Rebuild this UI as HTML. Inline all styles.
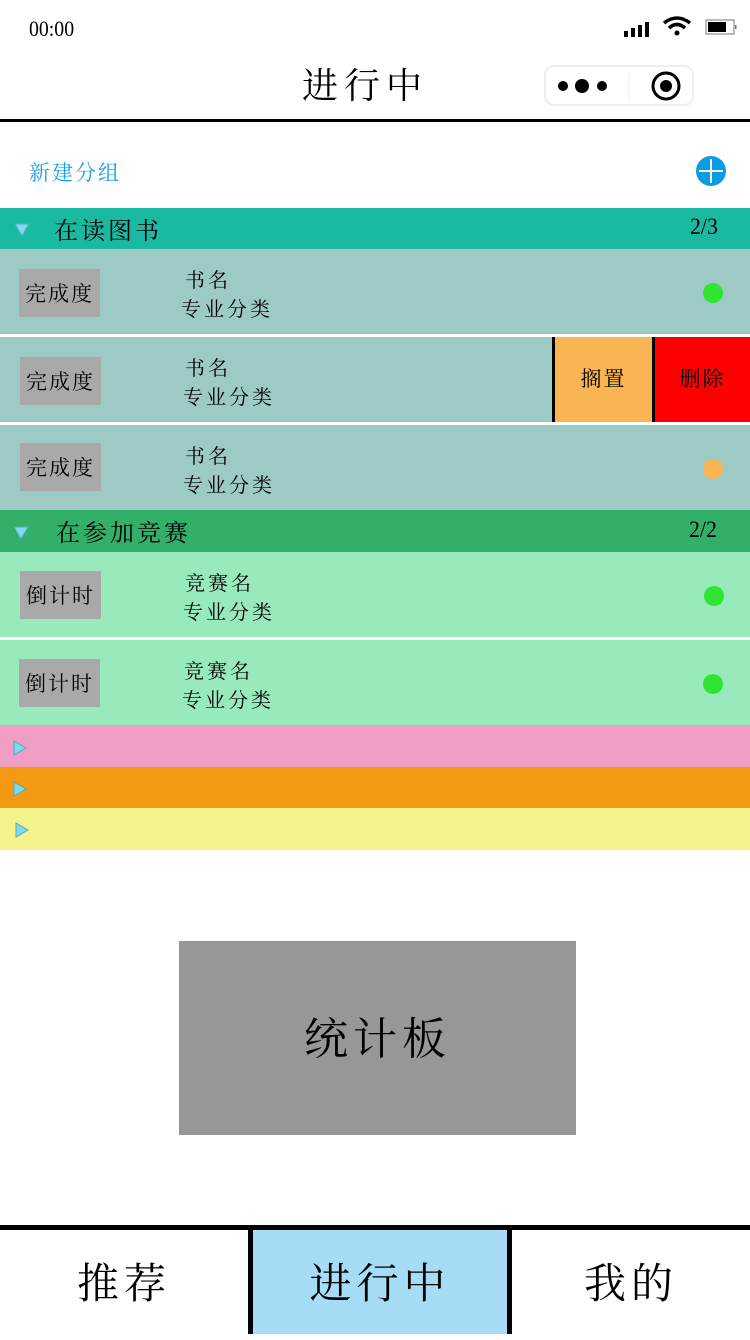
<!DOCTYPE html>
<html><head><meta charset="utf-8"><style>
*{margin:0;padding:0;box-sizing:border-box}
body{width:750px;height:1334px;background:#fff;position:relative;overflow:hidden;font-family:"Liberation Serif","Noto Serif CJK SC","Noto Sans CJK SC",serif;color:#000}
.a{position:absolute}
.row{position:absolute;left:0;width:750px;height:85px}
.badge{position:absolute;left:20px;top:20px;width:81px;height:48px;background:#a9a9a9;font-size:21px;line-height:50px;text-align:center;letter-spacing:2px}
.t1{position:absolute;left:185px;top:15px;font-size:20px;letter-spacing:3px}
.t2{position:absolute;left:183px;top:44px;font-size:20px;letter-spacing:3px}
.dot{position:absolute;left:703px;top:34px;width:20px;height:20px;border-radius:50%;background:#2fe52f}
.hdr{position:absolute;left:0;width:750px;height:42px}
</style></head><body>
<div class="a" style="left:29px;top:16px;font-size:22px;font-family:'Liberation Serif',serif;transform:scaleX(0.9);transform-origin:left">00:00</div>
<svg class="a" style="left:622px;top:14px" width="118" height="26">
<rect x="2" y="17" width="4" height="6" fill="#000"/><rect x="9" y="14" width="4" height="9" fill="#000"/><rect x="16" y="11" width="4" height="12" fill="#000"/><rect x="23" y="8" width="4" height="15" fill="#000"/>
<path d="M42 9 Q55 -1 68 9" stroke="#000" stroke-width="3.5" fill="none"/><path d="M47 14 Q55 7 63 14" stroke="#000" stroke-width="3.5" fill="none"/><circle cx="55" cy="19" r="2.5" fill="#000"/>
<rect x="84" y="6" width="28" height="14" fill="none" stroke="#777" stroke-width="1"/><rect x="86" y="8" width="18" height="10" fill="#000"/><rect x="113" y="11" width="1.5" height="4" fill="#777"/>
</svg>
<div class="a" style="left:0;width:730px;top:58px;text-align:center;font-size:36px;letter-spacing:6px">进行中</div>
<div class="a" style="left:544px;top:65px;width:150px;height:41px;border:2px solid #eee;border-radius:10px">
<svg width="146" height="37"><circle cx="17" cy="19" r="5" fill="#000"/><circle cx="36" cy="19" r="7" fill="#000"/><circle cx="56" cy="19" r="5" fill="#000"/><line x1="83" y1="6" x2="83" y2="32" stroke="#eee"/><circle cx="120" cy="19" r="13" stroke="#000" stroke-width="3" fill="none"/><circle cx="120" cy="19" r="6" fill="#000"/></svg></div>
<div class="a" style="left:0;top:119px;width:750px;height:3px;background:#000"></div>
<div class="a" style="left:29px;top:157px;font-size:21px;color:#1a9ee8;letter-spacing:2px">新建分组</div>
<svg class="a" style="left:696px;top:156px" width="30" height="30"><circle cx="15" cy="15" r="15" fill="#0a9be6"/><line x1="15" y1="3" x2="15" y2="27" stroke="#fff" stroke-width="2"/><line x1="3" y1="15" x2="27" y2="15" stroke="#fff" stroke-width="2"/></svg>

<div class="hdr" style="top:208px;height:41px;background:#1ab9a2">
<svg class="a" style="left:14px;top:15px" width="16" height="14"><path d="M1 1 L15 1 L8 13Z" fill="#7fd9ef" stroke="#5ab" stroke-width="1"/></svg>
<div class="a" style="left:54px;top:3px;font-size:24px;letter-spacing:3px">在读图书</div>
<div class="a" style="left:690px;top:6px;font-size:23px;transform:scaleX(0.95);transform-origin:left">2/3</div></div>
<div class="row" style="top:249px;background:#9ecac5"><div class="badge" style="left:19px">完成度</div><div class="t1">书名</div><div class="t2" style="left:181px">专业分类</div><div class="dot"></div></div>
<div class="row" style="top:337px;background:#9ecac5"><div class="badge">完成度</div><div class="t1">书名</div><div class="t2">专业分类</div>
<div class="a" style="left:552px;top:0;width:3px;height:85px;background:#000"></div>
<div class="a" style="left:555px;top:0;width:97px;height:85px;background:#f8b552;font-size:21px;line-height:85px;text-align:center;letter-spacing:2px">搁置</div>
<div class="a" style="left:652px;top:0;width:3px;height:85px;background:#000"></div>
<div class="a" style="left:655px;top:0;width:95px;height:85px;background:#ff0000;font-size:21px;line-height:85px;text-align:center;letter-spacing:2px">删除</div></div>
<div class="row" style="top:425px;background:#9ecac5"><div class="badge" style="top:18px">完成度</div><div class="t1">书名</div><div class="t2">专业分类</div><div class="dot" style="background:#f8b552"></div></div>

<div class="hdr" style="top:510px;background:#32b06a">
<svg class="a" style="left:13px;top:16px" width="16" height="14"><path d="M1 1 L15 1 L8 13Z" fill="#7fd9ef" stroke="#5ab" stroke-width="1"/></svg>
<div class="a" style="left:56px;top:3px;font-size:24px;letter-spacing:3px">在参加竞赛</div>
<div class="a" style="left:689px;top:7px;font-size:23px;transform:scaleX(0.95);transform-origin:left">2/2</div></div>
<div class="row" style="top:552px;background:#98e9bb"><div class="badge" style="top:19px">倒计时</div><div class="t1">竞赛名</div><div class="t2">专业分类</div><div class="dot" style="left:704px"></div></div>
<div class="row" style="top:640px;background:#98e9bb"><div class="badge" style="left:19px;top:19px">倒计时</div><div class="t1" style="left:184px">竞赛名</div><div class="t2" style="left:182px">专业分类</div><div class="dot"></div></div>
<div class="hdr" style="top:725px;background:#f19ec4"><svg class="a" style="left:13px;top:15px" width="14" height="16"><path d="M1 1 L13 8 L1 15Z" fill="#7fd9ef" stroke="#5ab"/></svg></div>
<div class="hdr" style="top:767px;height:41px;background:#f39a12"><svg class="a" style="left:13px;top:14px" width="14" height="16"><path d="M1 1 L13 8 L1 15Z" fill="#7fd9ef" stroke="#5ab"/></svg></div>
<div class="hdr" style="top:808px;background:#f3f38c"><svg class="a" style="left:15px;top:14px" width="14" height="16"><path d="M1 1 L13 8 L1 15Z" fill="#7fd9ef" stroke="#5ab"/></svg></div>

<div class="a" style="left:179px;top:941px;width:397px;height:194px;background:#979797;font-size:44px;line-height:198px;text-align:center;letter-spacing:5px">统计板</div>

<div class="a" style="left:0;top:1225px;width:750px;height:5px;background:#000"></div>
<div class="a" style="left:0;top:1230px;width:248px;height:104px;font-size:42px;line-height:110px;text-align:center;letter-spacing:5px">推荐</div>
<div class="a" style="left:248px;top:1230px;width:5px;height:104px;background:#000"></div>
<div class="a" style="left:253px;top:1230px;width:254px;height:104px;background:#a6dcf5;font-size:42px;line-height:110px;text-align:center;letter-spacing:5px">进行中</div>
<div class="a" style="left:507px;top:1230px;width:5px;height:104px;background:#000"></div>
<div class="a" style="left:512px;top:1230px;width:238px;height:104px;font-size:42px;line-height:110px;text-align:center;letter-spacing:5px">我的</div>
</body></html>
